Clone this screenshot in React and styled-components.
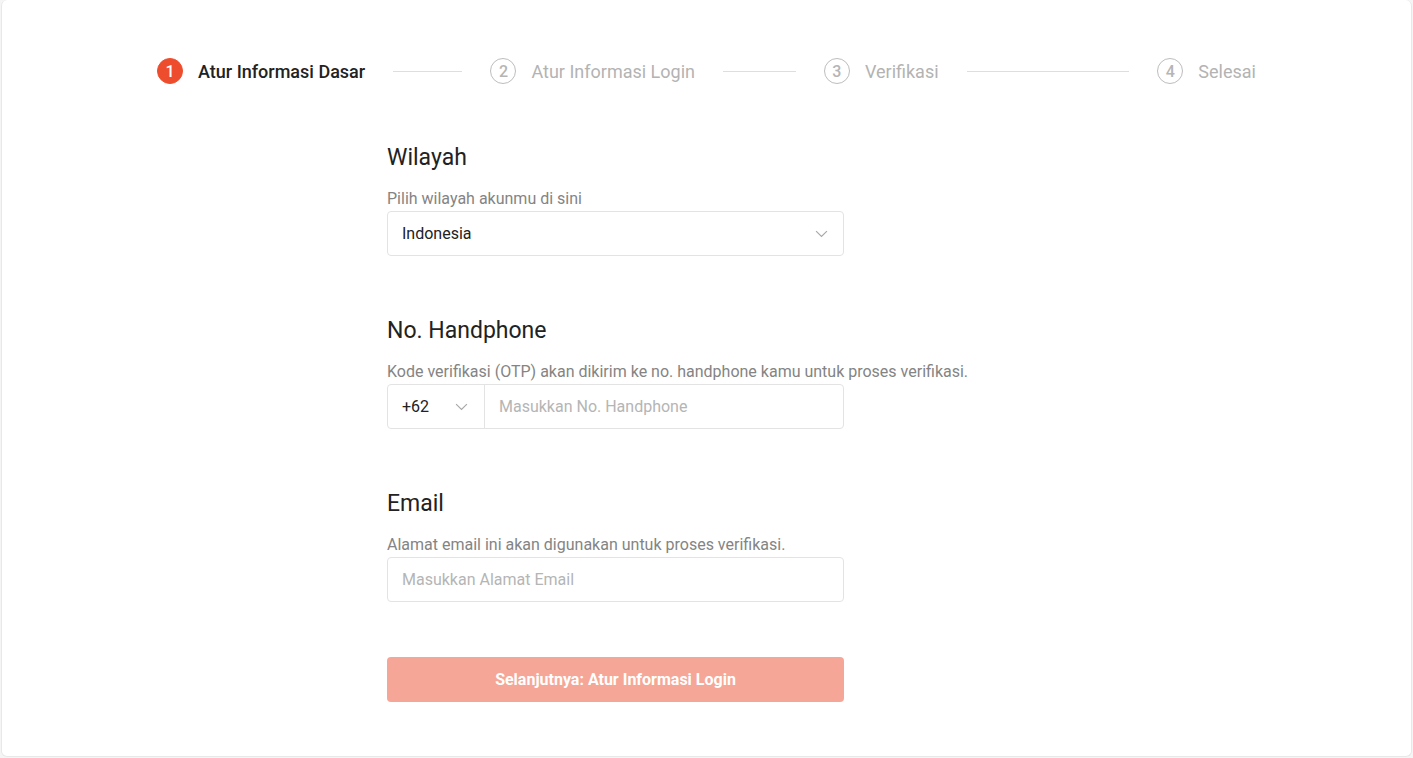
import React from "react";
import styled, { createGlobalStyle } from "styled-components";

const GlobalStyle = createGlobalStyle`
  * { box-sizing: border-box; }
  html, body { margin: 0; padding: 0; background: #f5f5f5; }
  body { font-family: Roboto, "Liberation Sans", Arial, sans-serif; }
`;

const steps = ["Atur Informasi Dasar", "Atur Informasi Login", "Verifikasi", "Selesai"];

const Chevron = ({ size = 13 }) => (
  <svg width={size} height={size} viewBox="0 0 12 12" fill="none">
    <path d="M1 3.8L6 8.6L11 3.8" stroke="#a8a8a8" strokeWidth="1.1" />
  </svg>
);

const App = () => {
  return (
    <>
      <GlobalStyle />
      <Card>
        <Stepper>
          {steps.map((label, i) => (
            <Step key={label} $last={i === steps.length - 1}>
              <Circle $active={i === 0}>{i + 1}</Circle>
              <StepLabel $active={i === 0}>{label}</StepLabel>
              {i < steps.length - 1 && <Line />}
            </Step>
          ))}
        </Stepper>

        <Form>
          <Section>
            <Heading>Wilayah</Heading>
            <Hint>Pilih wilayah akunmu di sini</Hint>
            <Field>
              <Value>Indonesia</Value>
              <Chevron />
            </Field>
          </Section>

          <Section>
            <Heading>No. Handphone</Heading>
            <Hint>Kode verifikasi (OTP) akan dikirim ke no. handphone kamu untuk proses verifikasi.</Hint>
            <Field $split>
              <Prefix>
                <Value>+62</Value>
                <Chevron />
              </Prefix>
              <Placeholder $inset>Masukkan No. Handphone</Placeholder>
            </Field>
          </Section>

          <Section>
            <Heading>Email</Heading>
            <Hint>Alamat email ini akan digunakan untuk proses verifikasi.</Hint>
            <Field>
              <Placeholder>Masukkan Alamat Email</Placeholder>
            </Field>
          </Section>

          <Button disabled>Selanjutnya: Atur Informasi Login</Button>
        </Form>
      </Card>
    </>
  );
};

const Card = styled.div`
  margin: 0 1px 1px 1px;
  height: 757px;
  background: #fff;
  border: 1px solid #e8e8e8;
  border-top: none;
  border-radius: 6px;
  padding-top: 57px;
`;

const Stepper = styled.div`
  width: 1099px;
  margin: 0 auto;
  display: flex;
  align-items: center;
  height: 28px;
`;

const Step = styled.div`
  display: flex;
  align-items: center;
  flex: ${(p) => (p.$last ? "none" : "1")};
`;

const Circle = styled.div`
  width: 26px;
  height: 26px;
  border-radius: 50%;
  flex: none;
  display: flex;
  align-items: center;
  justify-content: center;
  font-size: 16px;
  font-weight: 500;
  color: ${(p) => (p.$active ? "#fff" : "#b5b5b5")};
  background: ${(p) => (p.$active ? "#ee4d2d" : "#fff")};
  border: 1px solid ${(p) => (p.$active ? "#ee4d2d" : "#bdbdbd")};
`;

const StepLabel = styled.span`
  margin-left: 15px;
  font-size: 18px;
  white-space: nowrap;
  font-weight: ${(p) => (p.$active ? 500 : 400)};
  color: ${(p) => (p.$active ? "#222" : "#b3b3b3")};
`;

const Line = styled.div`
  flex: 1;
  height: 1px;
  background: #dedede;
  margin: 0 28px;
`;

const Form = styled.div`
  width: 457px;
  margin-left: 385px;
  padding-top: 59px;
  display: flex;
  flex-direction: column;
`;

const Section = styled.div`
  display: flex;
  flex-direction: column;
  margin-bottom: 61px;
  &:last-of-type {
    margin-bottom: 55px;
  }
`;

const Heading = styled.h2`
  margin: 0;
  font-size: 23px;
  line-height: 28px;
  font-weight: 400;
  color: #222;
`;

const Hint = styled.div`
  margin-top: 17px;
  font-size: 16px;
  line-height: 20px;
  color: #848484;
  white-space: nowrap;
`;

const Field = styled.div`
  margin-top: 2px;
  height: 45px;
  border: 1px solid #e3e3e3;
  border-radius: 4px;
  display: flex;
  align-items: center;
  justify-content: ${(p) => (p.$split ? "flex-start" : "space-between")};
  padding: ${(p) => (p.$split ? "0" : "0 15px 0 14px")};
`;

const Prefix = styled.div`
  width: 97px;
  height: 100%;
  border-right: 1px solid #e3e3e3;
  display: flex;
  align-items: center;
  justify-content: space-between;
  padding: 0 16px 0 14px;
`;

const Value = styled.span`
  font-size: 16px;
  color: #222;
`;

const Placeholder = styled.span`
  font-size: 16px;
  color: #b5b5b5;
  padding-left: ${(p) => (p.$inset ? "14px" : "0")};
`;

const Button = styled.button`
  height: 45px;
  border: none;
  border-radius: 4px;
  background: #f6a696;
  color: #fff;
  font-family: inherit;
  font-size: 16px;
  font-weight: 700;
  cursor: not-allowed;
`;

export default App;
